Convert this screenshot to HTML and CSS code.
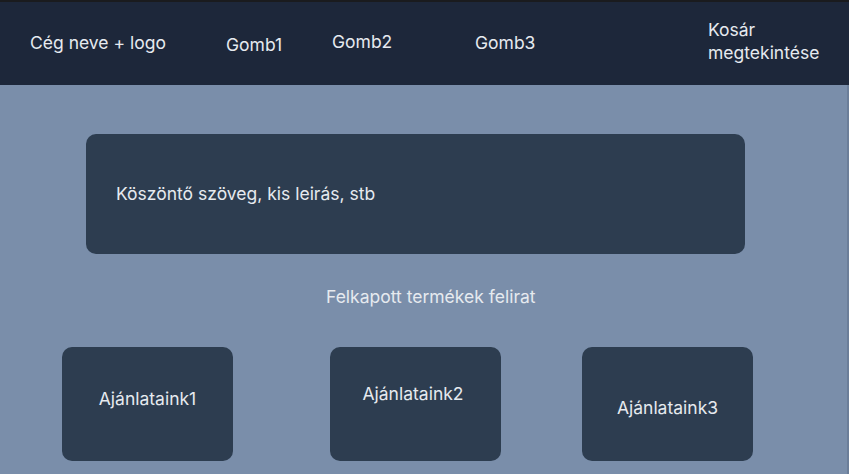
FILE: index.html
```html
<!DOCTYPE html>
<html lang="hu">
<head>
<meta charset="utf-8">
<title>Webshop</title>
<link rel="stylesheet" href="styles.css">
</head>
<body>
<header class="topbar">
  <div class="brand">Cég neve + logo</div>
  <nav class="nav">
    <a class="nav-item nav-1">Gomb1</a>
    <a class="nav-item nav-2">Gomb2</a>
    <a class="nav-item nav-3">Gomb3</a>
  </nav>
  <a class="cart">Kosár<br>megtekintése</a>
</header>
<main class="content">
  <section class="welcome">Köszöntő szöveg, kis leirás, stb</section>
  <h2 class="caption">Felkapott termékek felirat</h2>
  <div class="offers">
    <div class="offer offer-1"><span>Ajánlataink1</span></div>
    <div class="offer offer-2"><span>Ajánlataink2</span></div>
    <div class="offer offer-3"><span>Ajánlataink3</span></div>
  </div>
</main>
</body>
</html>
```
FILE: styles.css
```css
* { box-sizing: border-box; }
html, body {
  margin: 0;
  padding: 0;
  height: 100%;
}
body {
  font-family: Inter, "Noto Sans", "Liberation Sans", sans-serif;
  font-size: 17.5px;
  color: #e6eaef;
  background: #7a8eaa;
  display: flex;
  flex-direction: column;
  overflow: hidden;
}
.topbar {
  height: 85px;
  flex: none;
  border-top: 2px solid #1a1b1e;
  background: #1d273a;
  display: flex;
  align-items: center;
  padding-left: 30px;
}
.brand {
  width: 196px;
  line-height: 20px;
  padding-bottom: 2px;
}
.nav {
  display: flex;
  align-items: center;
}
.nav-item {
  line-height: 20px;
}
.nav-1 { width: 106px; padding-top: 2px; }
.nav-2 { width: 143px; padding-bottom: 4px; }
.nav-3 { width: 233px; padding-bottom: 2px; }
.cart {
  line-height: 23px;
  padding-bottom: 5px;
}
.content {
  flex: 1;
  padding-top: 49px;
  border-right: 2px solid #6b7e99;
}
.welcome {
  margin-left: 86px;
  width: 659px;
  height: 120px;
  background: #2d3d50;
  border-radius: 10px;
  display: flex;
  align-items: center;
  padding-left: 30px;
  line-height: 20px;
}
.caption {
  margin: 0;
  font-size: 17.5px;
  font-weight: 400;
  line-height: 20px;
  padding-left: 326px;
  padding-top: 33px;
}
.offers {
  display: flex;
  padding-left: 62px;
  margin-top: 40px;
}
.offer {
  width: 171px;
  height: 114px;
  background: #2d3d50;
  border-radius: 10px;
  display: flex;
  justify-content: center;
  align-items: center;
  line-height: 20px;
}
.offer-1 { padding-bottom: 10px; }
.offer-2 { margin-left: 97px; padding-bottom: 20px; padding-right: 5px; }
.offer-3 { margin-left: 81px; padding-top: 8px; }
```
